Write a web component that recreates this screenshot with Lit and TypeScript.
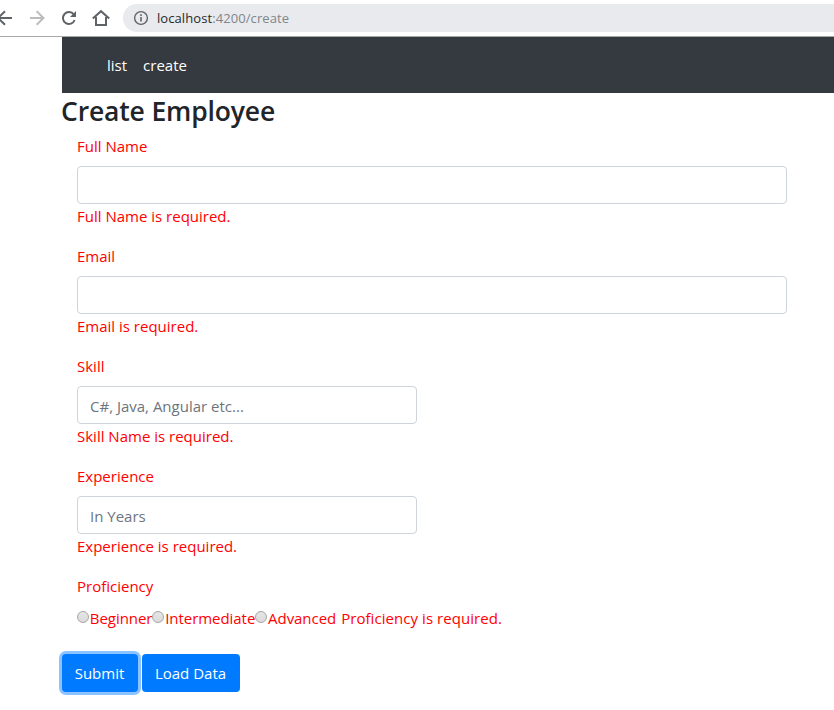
import { LitElement, html, css, nothing } from "lit";
import { customElement } from "lit/decorators.js";

interface Field {
  id: string;
  label: string;
  placeholder: string;
  error: string;
  half: boolean;
}

const FIELDS: Field[] = [
  { id: "fullName", label: "Full Name", placeholder: "", error: "Full Name is required.", half: false },
  { id: "email", label: "Email", placeholder: "", error: "Email is required.", half: false },
  { id: "skill", label: "Skill", placeholder: "C#, Java, Angular etc...", error: "Skill Name is required.", half: true },
  { id: "experience", label: "Experience", placeholder: "In Years", error: "Experience is required.", half: true },
];

@customElement("browser-bar")
class BrowserBar extends LitElement {
  static styles = css`
    :host {
      display: flex;
      align-items: center;
      box-sizing: border-box;
      height: 37px;
      border-bottom: 1px solid #a9a9a9;
      background: #fff;
      font-family: "Open Sans", "Noto Sans", sans-serif;
      font-size: 13px;
      letter-spacing: 0.08px;
      color: #27292d;
    }
    .icons {
      flex: none;
      display: block;
      width: 123px;
      height: 36px;
    }
    .address {
      flex: 1;
      display: flex;
      align-items: center;
      height: 28px;
      border-radius: 14px 0 0 14px;
      background: #e8eaed;
    }
    .info {
      flex: none;
      margin: 0 8px 0 10px;
    }
    .path {
      color: #80868b;
    }
  `;

  render() {
    return html`
      <svg class="icons" viewBox="0 0 123 36" fill="none" stroke="#5f6368" stroke-width="2">
        <path d="M12 18H-1M5 11.2L-1.8 18L5 24.8" />
        <path d="M30 18H43M36.7 11.2L43.5 18L36.7 24.8" stroke="#babcbe" />
        <path d="M73.8 14.5A6 6 0 1 0 74.6 20" />
        <path d="M76 11V17H70Z" fill="#5f6368" stroke="none" />
        <path d="M92.8 18.6L101 11.2L109.2 18.6M96 17V25H106V17" />
      </svg>
      <div class="address">
        <svg class="info" width="16" height="16" viewBox="0 0 16 16" fill="none" stroke="#5f6368">
          <circle cx="8" cy="8" r="6.4" stroke-width="1.4" />
          <path d="M8 7V11.6M8 4.3V5.9" stroke-width="1.6" />
        </svg>
        <span>localhost<span class="path">:4200/create</span></span>
      </div>
    `;
  }
}

@customElement("app-root")
class AppRoot extends LitElement {
  static styles = css`
    :host {
      display: block;
      height: 710px;
      overflow: hidden;
      background: #fff;
      color: #212529;
      font: 15px/24px "Open Sans", "Noto Sans", sans-serif;
    }
    .page {
      margin-left: 62px;
    }
    .nav {
      display: flex;
      align-items: center;
      gap: 16px;
      box-sizing: border-box;
      height: 56px;
      padding-left: 45px;
      background: #343a40;
      color: #fff;
    }
    .title {
      margin: 0 0 4px -1px;
      font-size: 26.5px;
      line-height: 37px;
      font-weight: 600;
      letter-spacing: -0.15px;
    }
    .form {
      padding-left: 15px;
      color: #f00;
    }
    .group {
      width: 710px;
      margin-bottom: 16px;
    }
    .half {
      width: 340px;
    }
    .label {
      display: block;
      margin-bottom: 8px;
    }
    .input {
      display: block;
      box-sizing: border-box;
      width: 100%;
      height: 38px;
      padding: 8px 12px 6px;
      border: 1px solid #ced4da;
      border-radius: 4px;
      background: #fff;
      font: inherit;
      color: #495057;
    }
    .input::placeholder {
      color: #6c757d;
      opacity: 1;
    }
    .choices {
      display: flex;
      white-space: nowrap;
    }
    .choice {
      display: flex;
      letter-spacing: -0.05px;
    }
    .radio {
      appearance: none;
      box-sizing: border-box;
      flex: none;
      width: 12px;
      height: 12px;
      margin: 5px 0.8px 0 0;
      border: 1px solid #a6a6a6;
      border-radius: 50%;
      background: linear-gradient(#e6e6e6, #dadada);
    }
    .choice-error {
      margin-left: 5px;
      letter-spacing: 0.06px;
    }
    .actions {
      display: flex;
      gap: 4px;
      margin-top: 24px;
    }
    .button {
      height: 38px;
      padding: 0 1px 0 0;
      border: 0;
      border-radius: 4px;
      background: #007bff;
      color: #fff;
      font: inherit;
      white-space: nowrap;
    }
    .submit {
      width: 76px;
      box-shadow: 0 0 0 3px #8ac3ff;
    }
    .load {
      width: 98px;
    }
  `;

  private field(f: Field) {
    return html`
      <div class="group ${f.half ? "half" : ""}">
        <label class="label" for=${f.id}>${f.label}</label>
        <input class="input" id=${f.id} type="text" placeholder=${f.placeholder || nothing} />
        <div class="error">${f.error}</div>
      </div>
    `;
  }

  render() {
    return html`
      <browser-bar></browser-bar>
      <main class="page">
        <nav class="nav"><span>list</span><span>create</span></nav>
        <h3 class="title">Create Employee</h3>
        <div class="form">
          ${FIELDS.map((f) => this.field(f))}
          <span class="label">Proficiency</span>
          <div class="choices">
            ${["Beginner", "Intermediate", "Advanced"].map(
              (c) => html`<label class="choice"><input class="radio" type="radio" name="proficiency" /><span>${c}</span></label>`
            )}
            <span class="choice-error">Proficiency is required.</span>
          </div>
        </div>
        <div class="actions">
          <button class="button submit">Submit</button>
          <button class="button load">Load Data</button>
        </div>
      </main>
    `;
  }
}
